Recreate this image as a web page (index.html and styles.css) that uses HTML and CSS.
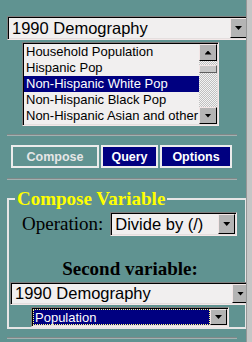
FILE: index.html
```html
<!DOCTYPE html>
<html>
<head>
    <title>Compose Variable</title>
    <link rel="stylesheet" href="styles.css">
</head>
<body>
    <div class="page">
        <div class="select top-select">
            <span class="value">1990 Demography</span>
            <span class="arrow down"></span>
        </div>

        <div class="listbox">
            <div class="options">
                <div class="option">Household Population</div>
                <div class="option">Hispanic Pop</div>
                <div class="option selected">Non-Hispanic White Pop</div>
                <div class="option">Non-Hispanic Black Pop</div>
                <div class="option">Non-Hispanic Asian and other</div>
            </div>
            <div class="scrollbar">
                <span class="arrow up"></span>
                <div class="track"><div class="thumb"></div></div>
                <span class="arrow down"></span>
            </div>
        </div>

        <hr class="rule">

        <div class="tabs">
            <button class="tab current compose-tab">Compose</button>
            <button class="tab query-tab">Query</button>
            <button class="tab options-tab">Options</button>
        </div>

        <hr class="rule">

        <fieldset class="compose">
            <legend>Compose Variable</legend>
            <div class="operation">
                <label>Operation:</label>
                <div class="select op-select">
                    <span class="value">Divide by (/)</span>
                    <span class="arrow down"></span>
                </div>
            </div>
            <div class="second-label">Second variable:</div>
            <div class="select second-select">
                <span class="value">1990 Demography</span>
                <span class="arrow down"></span>
            </div>
            <div class="select field-select">
                <span class="value"><span class="focus">Population</span></span>
                <span class="arrow down"></span>
            </div>
        </fieldset>

        <hr class="rule bottom-rule">
    </div>
</body>
</html>
```

FILE: styles.css
```css
body {
    margin: 0;
    background: #c6c6c6;
    font-family: "Liberation Sans", Arial, sans-serif;
}
.page {
    width: 247px;
    height: 342px;
    overflow: hidden;
    background: #609391;
    border-right: 1px solid #979797;
    padding: 16px 0 0 7px;
    box-sizing: border-box;
}

/* win95 style dropdowns */
.select {
    display: flex;
    align-items: center;
    box-sizing: border-box;
    background: #f1efef;
    border: 1px solid;
    border-color: #808080 #f4e8e8 #f4e8e8 #808080;
    box-shadow: inset 1px 1px 0 #000, inset -1px -1px 0 #e4dede;
    padding: 1px;
    font-size: 16.5px;
    color: #000;
}
.select .value {
    flex: 1;
    padding-left: 3px;
    white-space: nowrap;
    overflow: hidden;
}
.arrow {
    width: 17px;
    align-self: stretch;
    flex: none;
    box-sizing: border-box;
    background: #b4b4b4;
    border: 1px solid;
    border-color: #f2e6e6 #000 #000 #f2e6e6;
    display: flex;
    align-items: center;
    justify-content: center;
}
.arrow::after {
    content: "";
    width: 7px;
    height: 4px;
    background: #000;
}
.arrow.down::after {
    clip-path: polygon(0 0, 100% 0, 50% 100%);
}
.arrow.up::after {
    clip-path: polygon(50% 0, 100% 100%, 0 100%);
}
.top-select {
    width: 242px;
    height: 24px;
}

.listbox {
    display: flex;
    width: 197px;
    height: 84px;
    margin: 2px 0 0 15px;
    box-sizing: border-box;
    background: #f1efef;
    border: 1px solid;
    border-color: #808080 #f4e8e8 #f4e8e8 #808080;
    box-shadow: inset 1px 1px 0 #000, inset -1px -1px 0 #e4dede;
    padding: 1px;
}
.options {
    flex: 1;
    font-size: 13px;
}
.option {
    height: 16px;
    line-height: 16px;
    padding-left: 2px;
    white-space: nowrap;
    overflow: hidden;
}
.option.selected {
    background: #000080;
    color: #fff;
}
.scrollbar {
    width: 18px;
    display: flex;
    flex-direction: column;
}
.scrollbar .arrow {
    width: 18px;
    height: 17px;
    flex: none;
}
.track {
    flex: 1;
    background-image: repeating-conic-gradient(#c0c0c0 0 25%, #f4f4f4 0 50%);
    background-size: 2px 2px;
}
.thumb {
    height: 8px;
    margin-top: 4px;
    box-sizing: border-box;
    background: #c8c8c8;
    border: 1px solid;
    border-color: #f2e6e6 #606060 #606060 #f2e6e6;
}

.rule {
    width: 230px;
    height: 0;
    margin: 8px 0 0;
    border: 0;
    border-top: 1px solid #7f8888;
    border-bottom: 1px solid #a2b0b0;
}

.tabs {
    display: flex;
    margin: 9px 0 0 4px;
}
.tab {
    height: 23px;
    padding: 0;
    margin: 0 2px 0 0;
    box-sizing: border-box;
    font-family: "Liberation Sans", Arial, sans-serif;
    font-weight: bold;
    font-size: 12.5px;
    background: #000080;
    color: #fff;
    border: 2px solid #ececec;
}
.tab.current {
    background: #609391;
    color: #e6e6e6;
}
.compose-tab { width: 88px; }
.query-tab { width: 57px; margin-right: 2px; }
.options-tab { width: 72px; }

.rule + .tabs + .rule {
    margin-top: 10px;
}

.compose {
    width: 240px;
    min-width: 0;
    margin: 8px 0 0;
    padding: 0;
    box-sizing: border-box;
    border: 2px solid #e6e6e6;
}
.compose legend {
    margin-left: 6px;
    padding: 0 2px;
    font-family: "Liberation Serif", "Times New Roman", serif;
    font-weight: bold;
    font-size: 19px;
    line-height: 22px;
    color: #ffff00;
}
.operation {
    display: flex;
    align-items: center;
    margin-top: 2px;
    padding-left: 13px;
    gap: 7px;
}
.operation label,
.second-label {
    font-family: "Liberation Serif", "Times New Roman", serif;
    font-size: 19px;
    line-height: 22px;
    color: #000;
}
.op-select {
    width: 127px;
    height: 24px;
}
.second-label {
    font-weight: bold;
    text-align: center;
    margin-top: 22px;
    padding-left: 6px;
}
.second-select {
    width: 241px;
    height: 23px;
    margin: 2px 0 0 1px;
}
.field-select {
    width: 198px;
    height: 20px;
    margin: 2px 0 0 22px;
    font-size: 13px;
}
.field-select .value {
    align-self: stretch;
    padding-left: 0;
    display: flex;
    background: #000080;
}
.field-select .focus {
    flex: 1;
    display: flex;
    align-items: center;
    padding-left: 2px;
    color: #fff;
    outline: 1px dotted #ffff80;
    outline-offset: -1px;
}
.bottom-rule {
    margin-top: 8px;
}
```
